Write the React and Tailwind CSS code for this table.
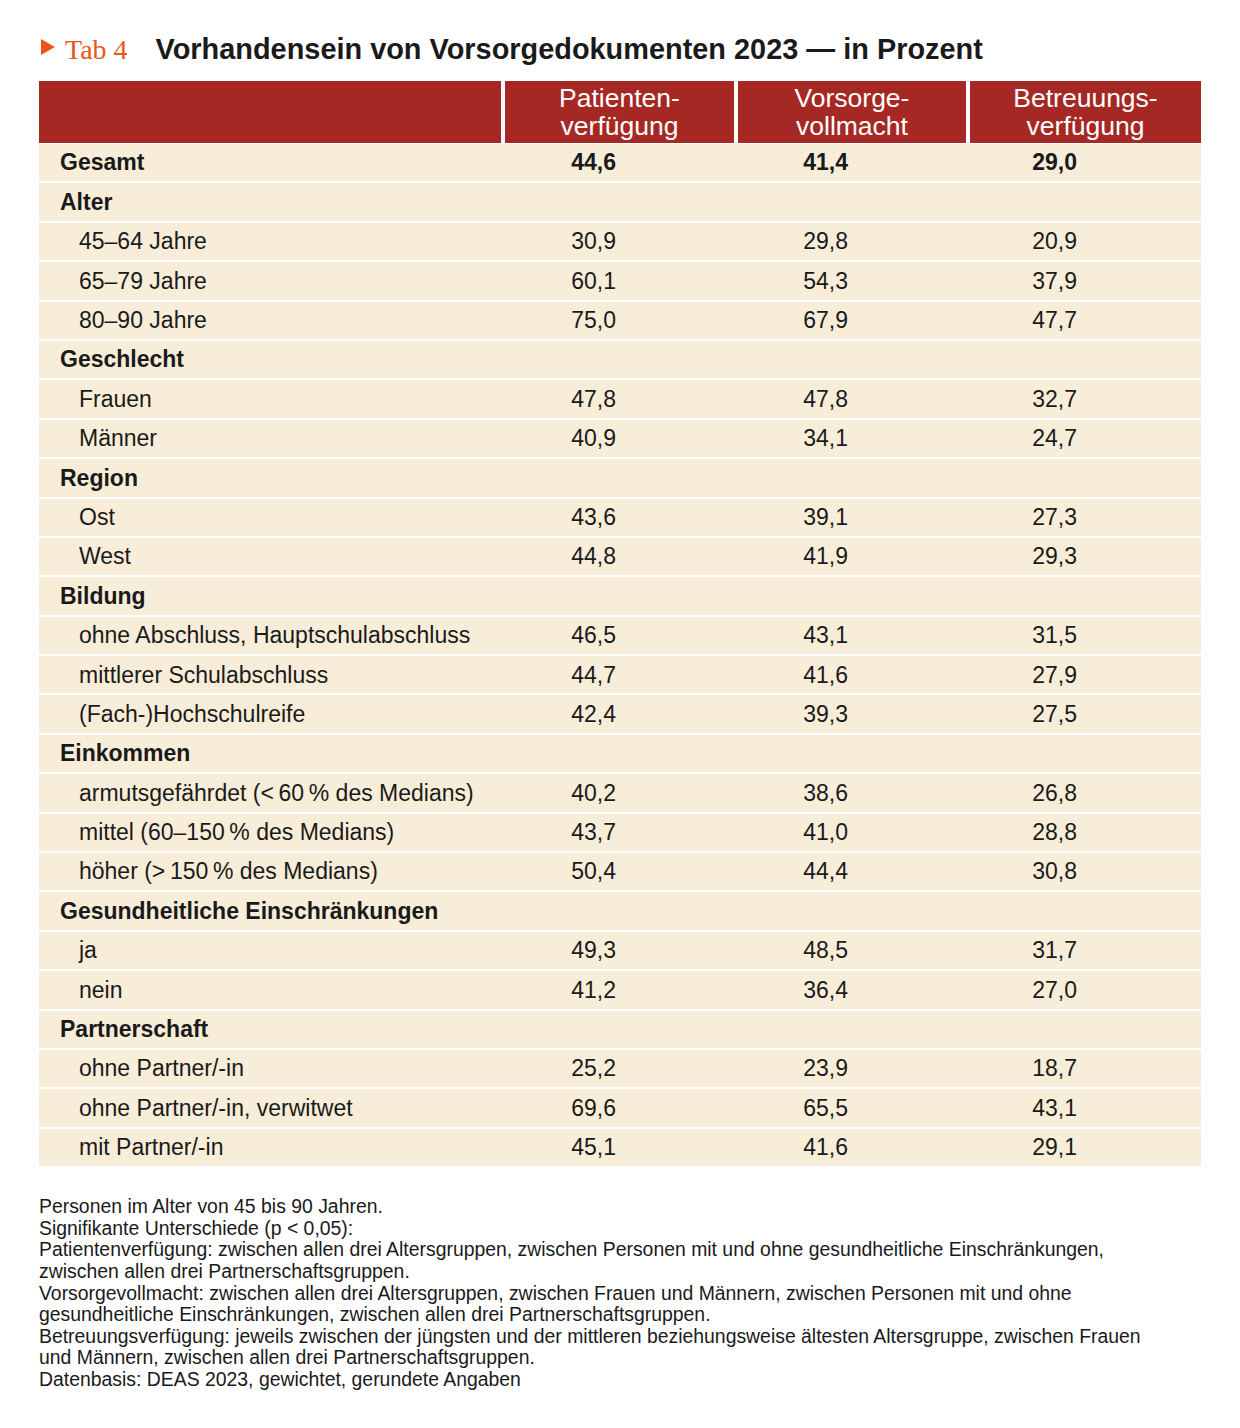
const rows = [
  { label: "Gesamt", vals: ["44,6", "41,4", "29,0"], bold: true },
  { label: "Alter", head: true },
  { label: "45–64 Jahre", vals: ["30,9", "29,8", "20,9"] },
  { label: "65–79 Jahre", vals: ["60,1", "54,3", "37,9"] },
  { label: "80–90 Jahre", vals: ["75,0", "67,9", "47,7"] },
  { label: "Geschlecht", head: true },
  { label: "Frauen", vals: ["47,8", "47,8", "32,7"] },
  { label: "Männer", vals: ["40,9", "34,1", "24,7"] },
  { label: "Region", head: true },
  { label: "Ost", vals: ["43,6", "39,1", "27,3"] },
  { label: "West", vals: ["44,8", "41,9", "29,3"] },
  { label: "Bildung", head: true },
  { label: "ohne Abschluss, Hauptschulabschluss", vals: ["46,5", "43,1", "31,5"] },
  { label: "mittlerer Schulabschluss", vals: ["44,7", "41,6", "27,9"] },
  { label: "(Fach-)Hochschulreife", vals: ["42,4", "39,3", "27,5"] },
  { label: "Einkommen", head: true },
  { label: "armutsgefährdet (<\u202F60\u202F% des Medians)", vals: ["40,2", "38,6", "26,8"] },
  { label: "mittel (60–150\u202F% des Medians)", vals: ["43,7", "41,0", "28,8"] },
  { label: "höher (>\u202F150\u202F% des Medians)", vals: ["50,4", "44,4", "30,8"] },
  { label: "Gesundheitliche Einschränkungen", head: true },
  { label: "ja", vals: ["49,3", "48,5", "31,7"] },
  { label: "nein", vals: ["41,2", "36,4", "27,0"] },
  { label: "Partnerschaft", head: true },
  { label: "ohne Partner/-in", vals: ["25,2", "23,9", "18,7"] },
  { label: "ohne Partner/-in, verwitwet", vals: ["69,6", "65,5", "43,1"] },
  { label: "mit Partner/-in", vals: ["45,1", "41,6", "29,1"] },
];

const notes = [
  "Personen im Alter von 45 bis 90 Jahren.",
  "Signifikante Unterschiede (p < 0,05):",
  "Patientenverfügung: zwischen allen drei Altersgruppen, zwischen Personen mit und ohne gesundheitliche Einschränkungen,",
  "zwischen allen drei Partnerschaftsgruppen.",
  "Vorsorgevollmacht: zwischen allen drei Altersgruppen, zwischen Frauen und Männern, zwischen Personen mit und ohne",
  "gesundheitliche Einschränkungen, zwischen allen drei Partnerschaftsgruppen.",
  "Betreuungsverfügung: jeweils zwischen der jüngsten und der mittleren beziehungsweise ältesten Altersgruppe, zwischen Frauen",
  "und Männern, zwischen allen drei Partnerschaftsgruppen.",
  "Datenbasis: DEAS 2023, gewichtet, gerundete Angaben",
];

export default function App() {
  return (
    <div className="w-[1240px] min-h-[1428px] bg-white px-[39px] pt-[34px] text-[#1a1a1a] font-['Liberation_Sans',Arial,sans-serif]">
      {/* Title */}
      <div className="flex items-center h-[32px] mb-[15px]">
        <svg width="16" height="18" viewBox="0 0 16 18" className="ml-[1px] mr-[9px] -mt-[6px]">
          <polygon points="1,1 15,9 1,17" fill="#e9561b" />
        </svg>
        <span className="text-[28px] text-[#e9561b] font-['Liberation_Serif',serif] mr-[28px]">Tab 4</span>
        <h1 className="text-[28.9px] font-bold">
          Vorhandensein von Vorsorgedokumenten 2023 — in Prozent
        </h1>
      </div>

      {/* Header */}
      <div className="grid grid-cols-[462px_229px_228px_231px] gap-x-[4px] h-[62px] text-white text-[26.5px] leading-[28px]">
        <div className="bg-[#a52824]" />
        <div className="bg-[#a52824] flex flex-col items-center justify-center">
          <span>Patienten-</span>
          <span>verfügung</span>
        </div>
        <div className="bg-[#a52824] flex flex-col items-center justify-center">
          <span>Vorsorge-</span>
          <span>vollmacht</span>
        </div>
        <div className="bg-[#a52824] flex flex-col items-center justify-center">
          <span>Betreuungs-</span>
          <span>verfügung</span>
        </div>
      </div>

      {/* Body */}
      <div className="flex flex-col gap-y-[2px] mt-[1px] text-[23px]">
        {rows.map((r, i) => (
          <div
            key={i}
            className={
              "grid grid-cols-[466px_233px_232px_231px] h-[37.4px] items-center bg-[#f8edd8] " +
              (r.bold || r.head ? "font-bold" : "")
            }
          >
            <div className={r.bold || r.head ? "pl-[21px]" : "pl-[40px]"}>{r.label}</div>
            {r.vals ? (
              <>
                <div className="text-right pr-[122px]">{r.vals[0]}</div>
                <div className="text-right pr-[122px]">{r.vals[1]}</div>
                <div className="text-right pr-[124px]">{r.vals[2]}</div>
              </>
            ) : null}
          </div>
        ))}
      </div>

      {/* Notes */}
      <div className="mt-[30px] text-[19.4px] leading-[21.6px]">
        {notes.map((n, i) => (
          <div key={i}>{n}</div>
        ))}
      </div>
    </div>
  );
}
